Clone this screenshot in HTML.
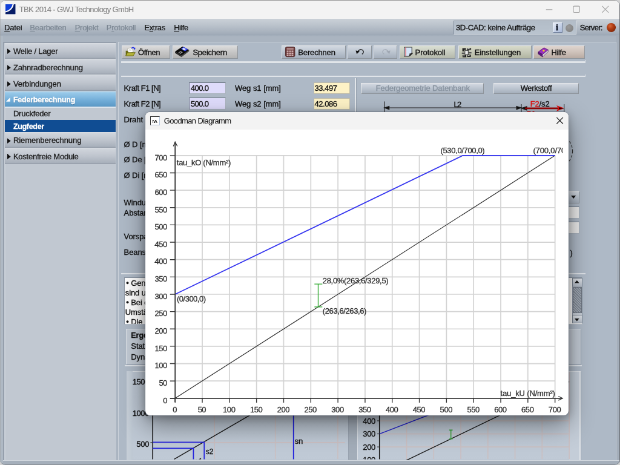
<!DOCTYPE html>
<html><head><meta charset="utf-8"><title>TBK 2014 - GWJ Technology GmbH</title>
<style>
html,body{margin:0;padding:0;width:620px;height:465px;overflow:hidden;background:#d2d2d2;}
#root{position:absolute;left:0;top:0;width:1024px;height:768px;transform:scale(0.60546875);transform-origin:0 0;font-family:"Liberation Sans",sans-serif;font-size:12px;overflow:hidden;background:#adb8c5;will-change:transform;opacity:0.999;border-radius:9px;}
#root div{position:absolute;box-sizing:border-box;}
#root svg{position:absolute;overflow:visible;}
.t{position:absolute;white-space:nowrap;-webkit-text-stroke:0.34px currentColor;}
u{text-decoration:underline;}
</style></head><body><div id="root">
<div style="left:0.0px;top:0.0px;width:1024.0px;height:768.0px;background:#aab4c0;"></div>
<div style="left:0.0px;top:0.0px;width:1024.0px;height:31.22px;background:#f3f3f3;"></div>
<svg style="left:9.25px;top:6.61px" width="16.35" height="16.19" viewBox="0 0 16 16"><rect width="16" height="16" fill="#0a2a8a"/><path d="M0 0H12.5C11 6 6 10.5 0 12Z" fill="#1040d8"/><path d="M11.4 0h2.4C12.6 7.2 7 12.4 0 13.7v-2.3C6 10 10.4 5.8 11.4 0Z" fill="#fff"/><path d="M13.6 0H16V16H0V13.3C7 12 12.5 7 13.6 0Z" fill="#061c66"/></svg>
<span class="t" style="left:31px;top:8px;transform:translate(0.84px,0.34px);font-size:13px;line-height:16px;color:#858585;letter-spacing:-0.665px;-webkit-text-stroke:0.1px currentColor;">TBK 2014 - GWJ Technology GmbH</span>
<svg style="left:0;top:0" width="1024" height="32"><g stroke="#a2a2a2" stroke-width="1.15" fill="none"><path d="M901.78 15.86H912.35"/><rect x="946.87" y="10.07" width="10.41" height="10.41" rx="1.8"/><path d="M994.27 9.91L1005.17 20.81M1005.17 9.91L994.27 20.81"/></g></svg>
<div style="left:0.0px;top:31.22px;width:1024.0px;height:28.57px;background:linear-gradient(#cbd1d8 0%,#bcc4cd 35%,#a6b0bc 80%,#9ea9b6 92%,#aab5c2 100%);"></div>
<span class="t" style="left:7px;top:38px;transform:translate(0.07px,0.4px);font-size:13px;line-height:16px;color:#111;letter-spacing:-0.196px;-webkit-text-stroke:0.22px currentColor;"><u>D</u>atei</span>
<span class="t" style="left:49px;top:38px;transform:translate(0.35px,0.4px);font-size:13px;line-height:16px;color:#7d8894;letter-spacing:-0.289px;-webkit-text-stroke:0.22px currentColor;"><u>B</u>earbeiten</span>
<span class="t" style="left:123px;top:38px;transform:translate(0.67px,0.4px);font-size:13px;line-height:16px;color:#7d8894;letter-spacing:-0.275px;-webkit-text-stroke:0.22px currentColor;"><u>P</u>rojekt</span>
<span class="t" style="left:175px;top:38px;transform:translate(0.7px,0.4px);font-size:13px;line-height:16px;color:#7d8894;letter-spacing:-0.232px;-webkit-text-stroke:0.22px currentColor;">P<u>r</u>otokoll</span>
<span class="t" style="left:238px;top:38px;transform:translate(0.46px,0.4px);font-size:13px;line-height:16px;color:#111;letter-spacing:-0.432px;-webkit-text-stroke:0.22px currentColor;">E<u>x</u>tras</span>
<span class="t" style="left:287px;top:38px;transform:translate(0.18px,0.4px);font-size:13px;line-height:16px;color:#111;letter-spacing:-0.515px;-webkit-text-stroke:0.22px currentColor;"><u>H</u>ilfe</span>
<div style="left:749.34px;top:33.53px;width:202.32px;height:23.62px;background:linear-gradient(#b3bdc8,#bac4cf);border:1.3px solid;border-color:#8591a0 #d8dde4 #d8dde4 #8591a0;"></div>
<span class="t" style="left:752px;top:37px;transform:translate(0.94px,0.74px);font-size:13px;line-height:16px;color:#111;letter-spacing:-0.37px;">3D-CAD: keine Aufträge</span>
<div style="left:912.52px;top:37.16px;width:16.02px;height:16.35px;background:linear-gradient(135deg,#e6ecf6,#a9b9d8);border:1px solid;border-color:#eef2f8 #6f7f9c #6f7f9c #eef2f8;"></div>
<span class="t" style="left:917px;top:37px;transform:translate(0.93px,0.6px);font-size:14px;line-height:16px;color:#050a18;font-weight:bold;letter-spacing:0px;font-family:'Liberation Serif',serif;">i</span>
<div style="left:933.82px;top:39.64px;width:13.21px;height:13.21px;background:radial-gradient(circle at 40% 35%,#9a9a9a,#7c7c7c);border-radius:50%;"></div>
<span class="t" style="left:957px;top:37px;transform:translate(0.74px,0.74px);font-size:13px;line-height:16px;color:#111;letter-spacing:-0.708px;">Server:</span>
<div style="left:1002.2px;top:37.99px;width:15.19px;height:15.19px;background:radial-gradient(circle at 38% 32%,#d66a3c 0%,#b23e14 36%,#8c2c0b 68%,#591803 100%);border-radius:50%;"></div>
<div style="left:4.95px;top:68.87px;width:186.96px;height:691.37px;background:#c1c8d1;border:2.4px solid #959fac;border-right:none;border-bottom:none;box-shadow:inset 2px 0 0 #cbd2da;"></div>
<div style="left:7.6px;top:70.52px;width:183.82px;height:26.1px;background:linear-gradient(#dde1e6 0%,#d0d5dc 7%,#bfc5ce 50%,#a9b1bc 92%,#8f98a4 100%);"></div>
<svg style="left:11.89px;top:79.77px" width="5.78" height="9.25" viewBox="0 0 4 6"><path d="M0 0L4 3L0 6Z" fill="#111"/></svg>
<span class="t" style="left:21px;top:76px;transform:translate(0.93px,0.55px);font-size:13px;line-height:16px;color:#1c1c1c;letter-spacing:-0.225px;">Welle / Lager</span>
<div style="left:7.6px;top:96.95px;width:183.82px;height:26.1px;background:linear-gradient(#dde1e6 0%,#d0d5dc 7%,#bfc5ce 50%,#a9b1bc 92%,#8f98a4 100%);"></div>
<svg style="left:11.89px;top:107.02px" width="5.78" height="9.25" viewBox="0 0 4 6"><path d="M0 0L4 3L0 6Z" fill="#111"/></svg>
<span class="t" style="left:21px;top:103px;transform:translate(0.93px,0.8px);font-size:13px;line-height:16px;color:#1c1c1c;letter-spacing:-0.124px;">Zahnradberechnung</span>
<div style="left:7.6px;top:123.38px;width:183.82px;height:26.26px;background:linear-gradient(#dde1e6 0%,#d0d5dc 7%,#bfc5ce 50%,#a9b1bc 92%,#8f98a4 100%);"></div>
<svg style="left:11.89px;top:133.95px" width="5.78" height="9.25" viewBox="0 0 4 6"><path d="M0 0L4 3L0 6Z" fill="#111"/></svg>
<span class="t" style="left:21px;top:130px;transform:translate(0.93px,0.72px);font-size:13px;line-height:16px;color:#1c1c1c;letter-spacing:-0.118px;">Verbindungen</span>
<div style="left:7.6px;top:151.12px;width:183.82px;height:26.43px;background:linear-gradient(#b4d8ef 0%,#98c9e9 9%,#72add8 55%,#5d9bc8 88%,#5690bd 93%,#dce4ec 94%,#dce4ec 100%);"></div>
<svg style="left:9.91px;top:160.7px" width="6.77" height="6.94" viewBox="0 0 4 4"><path d="M4 0V4H0Z" fill="#fff"/></svg>
<span class="t" style="left:21px;top:156px;transform:translate(0.93px,0.94px);font-size:12.4px;line-height:16px;color:#fff;font-weight:bold;letter-spacing:-0.166px;text-shadow:0 1px 1px rgba(40,80,120,.6);">Federberechnung</span>
<span class="t" style="left:21px;top:180px;transform:translate(0.93px,0.11px);font-size:13px;line-height:16px;color:#1c1c1c;letter-spacing:-0.201px;">Druckfeder</span>
<div style="left:7.6px;top:198.19px;width:183.82px;height:19.98px;background:#104d93;"></div>
<span class="t" style="left:21px;top:200px;transform:translate(0.93px,0.87px);font-size:12.4px;line-height:16px;color:#fff;font-weight:bold;letter-spacing:-0.263px;">Zugfeder</span>
<div style="left:7.6px;top:218.18px;width:183.82px;height:25.77px;background:linear-gradient(#dde1e6 0%,#d0d5dc 7%,#bfc5ce 50%,#a9b1bc 92%,#8f98a4 100%);"></div>
<svg style="left:11.89px;top:227.59px" width="5.78" height="9.25" viewBox="0 0 4 6"><path d="M0 0L4 3L0 6Z" fill="#111"/></svg>
<span class="t" style="left:21px;top:224px;transform:translate(0.93px,0.37px);font-size:13px;line-height:16px;color:#1c1c1c;letter-spacing:-0.067px;">Riemenberechnung</span>
<div style="left:7.6px;top:244.27px;width:183.82px;height:26.26px;background:linear-gradient(#dde1e6 0%,#d0d5dc 7%,#bfc5ce 50%,#a9b1bc 92%,#8f98a4 100%);"></div>
<svg style="left:11.89px;top:254.18px" width="5.78" height="9.25" viewBox="0 0 4 6"><path d="M0 0L4 3L0 6Z" fill="#111"/></svg>
<span class="t" style="left:21px;top:250px;transform:translate(0.93px,0.96px);font-size:13px;line-height:16px;color:#1c1c1c;letter-spacing:-0.245px;">Kostenfreie Module</span>
<div style="left:194.56px;top:69.04px;width:823.66px;height:691.2px;background:#aeb9c6;border:1.6px solid #cdd4dc;border-bottom:none;"></div>
<div style="left:1018.22px;top:59.46px;width:5.78px;height:708.54px;background:#a4aeba;"></div>
<div style="left:200.84px;top:74.65px;width:80.6px;height:22.46px;border:1px solid;border-color:#e6e8ea #8f959c #8f959c #e6e8ea;background:linear-gradient(#dcdcdc,#c6c6c6 50%,#b4b4b4);"></div>
<span class="t" style="left:228px;top:78px;transform:translate(0.05px,0.7px);font-size:13px;line-height:16px;color:#111;letter-spacing:-0.458px;">Öffnen</span>
<div style="left:284.9px;top:74.65px;width:108.51px;height:22.46px;border:1px solid;border-color:#e6e8ea #8f959c #8f959c #e6e8ea;background:linear-gradient(#dcdcdc,#c6c6c6 50%,#b4b4b4);"></div>
<span class="t" style="left:318px;top:78px;transform:translate(0.4px,0.7px);font-size:13px;line-height:16px;color:#111;letter-spacing:-0.216px;">Speichern</span>
<div style="left:464.6px;top:74.65px;width:106.2px;height:22.46px;border:1px solid;border-color:#e6e8ea #8f959c #8f959c #e6e8ea;background:linear-gradient(#d3d9e1,#bcc5d0 50%,#a5afbc);"></div>
<span class="t" style="left:492px;top:78px;transform:translate(0.31px,0.7px);font-size:13px;line-height:16px;color:#111;letter-spacing:-0.16px;">Berechnen</span>
<div style="left:573.77px;top:74.65px;width:39.97px;height:22.46px;border:1px solid;border-color:#e6e8ea #8f959c #8f959c #e6e8ea;background:linear-gradient(#d3d9e1,#bcc5d0 50%,#a5afbc);"></div>
<div style="left:616.71px;top:74.65px;width:38.98px;height:22.46px;border:1px solid;border-color:#e6e8ea #8f959c #8f959c #e6e8ea;background:linear-gradient(#d3d9e1,#bcc5d0 50%,#a5afbc);"></div>
<div style="left:659.82px;top:74.65px;width:92.66px;height:22.46px;border:1px solid;border-color:#e6e8ea #8f959c #8f959c #e6e8ea;background:linear-gradient(#dadfd3,#c8ccc0 50%,#b5baac);"></div>
<span class="t" style="left:685px;top:78px;transform:translate(0.55px,0.7px);font-size:13px;line-height:16px;color:#111;letter-spacing:-0.047px;">Protokoll</span>
<div style="left:757.1px;top:74.65px;width:120.73px;height:22.46px;border:1px solid;border-color:#e6e8ea #8f959c #8f959c #e6e8ea;background:linear-gradient(#d8dbcb,#c6c9b8 50%,#b1b5a2);"></div>
<span class="t" style="left:783px;top:78px;transform:translate(0.66px,0.7px);font-size:13px;line-height:16px;color:#111;letter-spacing:-0.133px;">Einstellungen</span>
<div style="left:881.3px;top:74.65px;width:84.23px;height:22.46px;border:1px solid;border-color:#e6e8ea #8f959c #8f959c #e6e8ea;background:linear-gradient(#dfd5cf,#cfc3bb 50%,#b9aba3);"></div>
<span class="t" style="left:910px;top:78px;transform:translate(0.5px,0.7px);font-size:13px;line-height:16px;color:#111;letter-spacing:-0.391px;">Hilfe</span>
<svg style="left:206.78px;top:76.97px" width="16.85" height="16.19" viewBox="0 0 20 19" preserveAspectRatio="none"><path d="M.8 8V17.8H14.6V9.6H8L6.6 8Z" fill="#6a6a12"/><path d="M3.8 4.4L12.6 1.2L15.6 10.2L6.6 13.4Z" fill="#fff" stroke="#9c9c8c" stroke-width=".7"/><path d="M6.4 6.2L11.8 4.2M7.2 8.4L12.6 6.4" stroke="#b8b8b8" stroke-width=".7"/><path d="M.8 17.8L4.2 11.4H19.4L15.4 17.8Z" fill="#b3b238" stroke="#5c5c0a" stroke-width="1"/><path d="M12.2 3.8C13 1 16.6 .6 17.8 3.4" stroke="#2433e6" stroke-width="1.8" fill="none"/><path d="M15.4 3L19.8 2L18.8 6.6Z" fill="#2433e6"/></svg>
<svg style="left:288.37px;top:76.47px" width="25.27" height="18.66" viewBox="0 0 30 22" preserveAspectRatio="none"><path d="M1.2 11L14 18.6V21.4L1.2 13.6Z" fill="#2a2a2a"/><path d="M14 18.6L28.9 7.6V10L14 21.4Z" fill="#444"/><path d="M1.2 11L15.8 1L28.9 7.6L14 18.6Z" fill="#0a0a0a"/><path d="M12.6 5.4L18.2 1.9L26.6 6.2L21 10.2Z" fill="#3345ea"/><path d="M14.8 5.6L18.2 3.6L22.6 5.9L19.2 8.2Z" fill="#eef1ff"/><path d="M7.6 12.6L12.2 9.6L16.6 12L12 15.2Z" fill="#9a9a9a"/><path d="M9.8 12.6L11.6 11.4L13.4 12.4L11.6 13.6Z" fill="#1a1a1a"/></svg>
<svg style="left:470.54px;top:76.63px" width="16.35" height="17.18" viewBox="0 0 19 20" preserveAspectRatio="none"><rect x=".5" y=".5" width="18" height="19" rx="2.6" fill="#6c3b3b" stroke="#4a2424" stroke-width="1"/><rect x="3" y="2.6" width="13" height="3.2" fill="#b48c8c"/><rect x="3.0" y="7.6" width="3.4" height="2.5" fill="#dcbcbc"/><rect x="3.0" y="11.399999999999999" width="3.4" height="2.5" fill="#dcbcbc"/><rect x="3.0" y="15.2" width="3.4" height="2.5" fill="#dcbcbc"/><rect x="7.6" y="7.6" width="3.4" height="2.5" fill="#dcbcbc"/><rect x="7.6" y="11.399999999999999" width="3.4" height="2.5" fill="#dcbcbc"/><rect x="7.6" y="15.2" width="3.4" height="2.5" fill="#dcbcbc"/><rect x="12.2" y="7.6" width="3.4" height="2.5" fill="#dcbcbc"/><rect x="12.2" y="11.399999999999999" width="3.4" height="2.5" fill="#dcbcbc"/><rect x="12.2" y="15.2" width="3.4" height="2.5" fill="#dcbcbc"/></svg>
<svg style="left:586.65px;top:79.28px" width="15.19" height="11.89" viewBox="0 0 18 14" preserveAspectRatio="none"><path d="M4.5 8.2C6.5 2.6 13.2 1.6 15.4 6.2C16.4 8.6 15 11.2 12.8 12.2" stroke="#111" stroke-width="1.5" fill="none"/><path d="M.6 5.2L8.4 6.4L2.6 12.2Z" fill="#111"/></svg>
<svg style="left:629.93px;top:79.28px" width="15.19" height="11.89" viewBox="0 0 18 14" preserveAspectRatio="none"><g transform="translate(18 0) scale(-1 1)"><path d="M4.5 8.2C6.5 2.6 13.2 1.6 15.4 6.2C16.4 8.6 15 11.2 12.8 12.2" stroke="#a0a8b3" stroke-width="1.3" fill="none"/><path d="M.6 5.2L8.4 6.4L2.6 12.2Z" fill="#a0a8b3"/></g></svg>
<svg style="left:665.6px;top:77.3px" width="16.35" height="16.68" viewBox="0 0 20 20" preserveAspectRatio="none"><path d="M2 1.2H17.4V13L12 19H2Z" fill="#d5e4f6" stroke="#3a3a3a" stroke-width="1.3"/><path d="M5 1.6V18.6" stroke="#e04a4a" stroke-width="1.4"/><path d="M12 19L12.6 13.4L17.4 13Z" fill="#555"/><path d="M11.4 17.6L17.6 11.6L19.4 13.4L13.2 19.2Z" fill="#222"/></svg>
<svg style="left:761.06px;top:76.97px" width="18.83" height="18.83" viewBox="0 0 22 22" preserveAspectRatio="none"><path d="M3 3H10V6H6.6V9H3Z" fill="#222"/><path d="M12 2.5H20V6.5H15.4V8.8H12Z" fill="#3a3a3a"/><path d="M8 7.4H14.4V15.4H8Z" fill="#e9e9e9" stroke="#222" stroke-width="1"/><path d="M2 11.4H8V14H2ZM14.4 10.4H20.6V13H14.4Z" fill="#555"/><path d="M3.4 16.2H10.4V20.4H3.4ZM12.4 15.6H19.4V20H12.4Z" fill="#1e1e1e"/><path d="M4.6 17.2H8V18.4H4.6ZM13.6 16.6H17V17.8H13.6ZM13.2 3.6H17V4.8H13.2Z" fill="#f4f4f4"/></svg>
<svg style="left:888.24px;top:77.96px" width="18.17" height="17.18" viewBox="0 0 22 21" preserveAspectRatio="none"><path d="M1 9.6L12.6 1L21 5.4L9.6 14.6Z" fill="#9a2fc0" stroke="#4a1266" stroke-width="1"/><path d="M1 9.6V13.6L9.6 19.6V14.6Z" fill="#5a1a7a" stroke="#3a0c52" stroke-width=".8"/><path d="M9.6 14.6L21 5.4V9L9.6 19.6Z" fill="#f2ecf6" stroke="#4a1266" stroke-width=".8"/><path d="M9.6 16.4L21 6.8M9.6 18L21 8" stroke="#a9a0b2" stroke-width=".5"/><circle cx="12" cy="6.8" r="2" fill="#f2d024"/></svg>
<div style="left:199.68px;top:101.41px;width:767.34px;height:2.23px;background:linear-gradient(#d3d9e0,#e4e8ec 40%,#dfe3e8);"></div>
<div style="left:199.68px;top:125.03px;width:767.34px;height:2.23px;background:linear-gradient(#d3d9e0,#e4e8ec 40%,#dfe3e8);"></div>
<div style="left:199.68px;top:450.56px;width:767.34px;height:2.23px;background:linear-gradient(#d3d9e0,#e4e8ec 40%,#dfe3e8);"></div>
<div style="left:965.53px;top:99.43px;width:1.49px;height:3.96px;background:#dfe3e8;"></div>
<div style="left:965.53px;top:123.05px;width:1.49px;height:3.96px;background:#dfe3e8;"></div>
<div style="left:585.83px;top:128.83px;width:1.98px;height:321.4px;background:#e2e6ea;"></div>
<div style="left:587.81px;top:128.83px;width:0.83px;height:321.4px;background:#98a3b0;"></div>
<span class="t" style="left:204px;top:138px;transform:translate(0.6px,0.16px);font-size:13px;line-height:16px;color:#111;letter-spacing:-0.486px;">Kraft F1 [N]</span>
<span class="t" style="left:204px;top:163px;transform:translate(0.6px,0.76px);font-size:13px;line-height:16px;color:#111;letter-spacing:-0.486px;">Kraft F2 [N]</span>
<span class="t" style="left:204px;top:189px;transform:translate(0.6px,0.69px);font-size:13px;line-height:16px;color:#111;letter-spacing:-0.1px;">Draht</span>
<span class="t" style="left:204px;top:230px;transform:translate(0.6px,0.65px);font-size:13px;line-height:16px;color:#111;letter-spacing:-0.1px;">Ø D [mm]</span>
<span class="t" style="left:204px;top:256px;transform:translate(0.6px,0.41px);font-size:13px;line-height:16px;color:#111;letter-spacing:-0.1px;">Ø De [mm]</span>
<span class="t" style="left:204px;top:281px;transform:translate(0.6px,0.52px);font-size:13px;line-height:16px;color:#111;letter-spacing:-0.1px;">Ø Di [mm]</span>
<span class="t" style="left:204px;top:326px;transform:translate(0.6px,0.77px);font-size:13px;line-height:16px;color:#111;letter-spacing:-0.1px;">Windungszahl</span>
<span class="t" style="left:204px;top:343px;transform:translate(0.6px,0.78px);font-size:13px;line-height:16px;color:#111;letter-spacing:-0.1px;">Abstand</span>
<span class="t" style="left:204px;top:382px;transform:translate(0.6px,0.93px);font-size:13px;line-height:16px;color:#111;letter-spacing:-0.1px;">Vorspannung</span>
<span class="t" style="left:204px;top:408px;transform:translate(0.6px,0.86px);font-size:13px;line-height:16px;color:#111;letter-spacing:-0.1px;">Beanspruchung</span>
<div style="left:312.49px;top:135.6px;width:60.45px;height:19.65px;border:1px solid;border-color:#6f7a88 #aab3be #aab3be #6f7a88;background:#dfdcfb;"></div>
<span class="t" style="left:314px;top:138px;transform:translate(0.93px,0.16px);font-size:13px;line-height:16px;color:#111;letter-spacing:-0.618px;">400.0</span>
<div style="left:312.49px;top:161.2px;width:60.45px;height:19.65px;border:1px solid;border-color:#6f7a88 #aab3be #aab3be #6f7a88;background:#dfdcfb;"></div>
<span class="t" style="left:314px;top:163px;transform:translate(0.93px,0.76px);font-size:13px;line-height:16px;color:#111;letter-spacing:-0.618px;">500.0</span>
<span class="t" style="left:387px;top:138px;transform:translate(0.93px,0.16px);font-size:13px;line-height:16px;color:#111;letter-spacing:-0.036px;">Weg s1 [mm]</span>
<span class="t" style="left:387px;top:163px;transform:translate(0.93px,0.76px);font-size:13px;line-height:16px;color:#111;letter-spacing:-0.036px;">Weg s2 [mm]</span>
<div style="left:518.11px;top:135.76px;width:59.95px;height:19.65px;border:1px solid rgba(110,120,135,.45);background:#fdf2c6;"></div>
<span class="t" style="left:519px;top:138px;transform:translate(0.56px,0.16px);font-size:13px;line-height:16px;color:#111;letter-spacing:-0.487px;">33.497</span>
<div style="left:518.11px;top:161.53px;width:59.95px;height:19.65px;border:1px solid rgba(110,120,135,.45);background:#fdf2c6;"></div>
<span class="t" style="left:519px;top:163px;transform:translate(0.56px,0.76px);font-size:13px;line-height:16px;color:#111;letter-spacing:-0.487px;">42.086</span>
<div style="left:595.74px;top:136.75px;width:203.64px;height:18.0px;border:1px solid;border-color:#e6e8ea #8f959c #8f959c #e6e8ea;background:linear-gradient(#d3d9e1,#bcc5d0 50%,#a5afbc);"></div>
<span class="t" style="left:620px;top:137px;transform:translate(0.81px,0.83px);font-size:13px;line-height:16px;color:#8893a0;letter-spacing:-0.138px;">Federgeometrie Datenbank</span>
<div style="left:814.74px;top:136.75px;width:140.88px;height:18.0px;border:1px solid;border-color:#e6e8ea #8f959c #8f959c #e6e8ea;background:linear-gradient(#d3d9e1,#bcc5d0 50%,#a5afbc);"></div>
<span class="t" style="left:859px;top:137px;transform:translate(0.63px,0.83px);font-size:13px;line-height:16px;color:#111;letter-spacing:-0.321px;">Werkstoff</span>
<svg style="left:0;top:0" width="1024" height="768"><g stroke="#222" stroke-width="1.1" fill="none"><path d="M634.71 178.04H862.14M634.71 167.47V184.98M860.99 172.1V184.98M931.67 172.1V184.98"/><path d="M634.71 178.04l8 -2.6v5.2zM860.99 178.04l-8 -2.6v5.2zM860.99 178.87l9 -3v6z" fill="#111"/></g><path d="M867.1 178.87H923.25" stroke="#9c0606" stroke-width="2.8"/><path d="M932.01 178.87l-13 -4.8l3 4.8l-3 4.8z" fill="#e01010"/><path d="M932.01 178.87l-9 -1.6v3.2z" fill="#300"/><g fill="#e01010"><rect x="870.4" y="183.16" width="6" height="1.6"/><rect x="879.48" y="183.16" width="3" height="1.6"/></g></svg>
<span class="t" style="left:749px;top:164px;transform:translate(0.47px,0.58px);font-size:13px;line-height:16px;color:#111;letter-spacing:-1.744px;">L2</span>
<span class="t" style="left:875px;top:163px;transform:translate(0.65px,0.92px);font-size:13px;line-height:16px;color:#111;letter-spacing:-0.118px;"><span style="color:#e01010">F2</span>/s2</span>
<svg style="left:0;top:0" width="1024" height="768"><circle cx="918.3" cy="249.39" r="27.25" fill="none" stroke="#333" stroke-width="1.2" stroke-dasharray="4 3"/></svg>
<div style="left:891.87px;top:315.62px;width:64.74px;height:19.98px;border:1px solid;border-color:#e6e8ea #8f959c #8f959c #e6e8ea;background:linear-gradient(#d3d9e1,#bcc5d0 50%,#a5afbc);"></div>
<svg style="left:943.07px;top:323.06px" width="8.26" height="4.95" viewBox="0 0 10 6"><path d="M0 0H10L5 6Z" fill="#111"/></svg>
<div style="left:891.87px;top:340.56px;width:64.74px;height:19.98px;border:1px solid;border-color:#6f7a88 #aab3be #aab3be #6f7a88;background:#eaeaea;"></div>
<div style="left:891.87px;top:366.49px;width:64.74px;height:19.82px;border:1px solid;border-color:#6f7a88 #aab3be #aab3be #6f7a88;background:#eaeaea;"></div>
<span class="t" style="left:941px;top:409px;transform:translate(0.55px,0.85px);font-size:13px;line-height:16px;color:#111;letter-spacing:-0.1px;">)</span>
<div style="left:205.3px;top:458.49px;width:756.77px;height:77.13px;border:1px solid;border-color:#8792a0 #b9c1cb #b9c1cb #8792a0;background:#fff;"></div>
<span class="t" style="left:208px;top:460px;transform:translate(0.23px,0.06px);font-size:13px;line-height:16px;color:#111;letter-spacing:-0.1px;">• Genauigkeit</span>
<span class="t" style="left:206px;top:476px;transform:translate(0.75px,0.08px);font-size:13px;line-height:16px;color:#111;letter-spacing:-0.1px;">sind unbedingt</span>
<span class="t" style="left:208px;top:492px;transform:translate(0.23px,0.1px);font-size:13px;line-height:16px;color:#111;letter-spacing:-0.1px;">• Bei dynamischer</span>
<span class="t" style="left:206px;top:508px;transform:translate(0.75px,0.12px);font-size:13px;line-height:16px;color:#111;letter-spacing:-0.1px;">Umständen</span>
<div style="left:0;top:0;width:1024px;height:768px;clip-path:inset(523.56px 80.93px 233.21px 206.29px);">
<span class="t" style="left:208px;top:524px;transform:translate(0.23px,0.14px);font-size:13px;line-height:16px;color:#111;letter-spacing:-0.1px;">• Die Berechnung</span>
</div>
<div style="left:944.72px;top:458.82px;width:16.85px;height:75.48px;background:#c5ccd5;border:1px solid #8a94a2;"></div>
<div style="left:944.72px;top:458.82px;width:16.85px;height:14.53px;background:linear-gradient(#dfe3e8,#b5bdc8);border:1px solid #7d8794;"></div>
<div style="left:944.72px;top:520.26px;width:16.85px;height:14.04px;background:linear-gradient(#dfe3e8,#b5bdc8);border:1px solid #7d8794;"></div>
<div style="left:945.71px;top:474.34px;width:14.86px;height:42.61px;background:repeating-linear-gradient(45deg,#7f8792 0 1.5px,#a3abb6 1.5px 3px);border:1px solid #6e7682;"></div>
<svg style="left:949.35px;top:463.44px" width="7.6" height="4.62" viewBox="0 0 10 6"><path d="M0 6H10L5 0Z" fill="#111"/></svg>
<svg style="left:949.35px;top:525.54px" width="7.6" height="4.62" viewBox="0 0 10 6"><path d="M0 0H10L5 6Z" fill="#111"/></svg>
<div style="left:205.96px;top:602.67px;width:755.28px;height:2.23px;background:linear-gradient(#d3d9e0,#e4e8ec 40%,#dfe3e8);"></div>
<div style="left:208.1px;top:543.05px;width:752.31px;height:58.47px;background:#c1c9d3;border:1.5px solid;border-color:#dbe0e6 #99a3b0 #99a3b0 #dbe0e6;"></div>
<span class="t" style="left:216px;top:546px;transform:translate(0.33px,0.06px);font-size:12.4px;line-height:16px;color:#111;font-weight:bold;letter-spacing:0px;">Ergebnisse</span>
<span class="t" style="left:216px;top:564px;transform:translate(0.33px,0.44px);font-size:13px;line-height:16px;color:#111;letter-spacing:-0.1px;">Statisch</span>
<span class="t" style="left:216px;top:582px;transform:translate(0.33px,0.44px);font-size:13px;line-height:16px;color:#111;letter-spacing:-0.1px;">Dynamisch</span>
<div style="left:208.93px;top:613.08px;width:367.15px;height:146.66px;background:linear-gradient(#bac4d0,#c0cad6);border:1.5px solid;border-color:#dbe0e6 #99a3b0 transparent #dbe0e6;"></div>
<div style="left:208.93px;top:613.08px;width:9.91px;height:146.66px;background:linear-gradient(90deg,#c8d0d9,#bec8d3);"></div>
<div style="left:590.29px;top:613.08px;width:369.3px;height:146.66px;background:linear-gradient(#bac4d0,#c0cad6);border:1.5px solid;border-color:#dbe0e6 #99a3b0 transparent #dbe0e6;"></div>
<div style="left:940.43px;top:614.4px;width:17.51px;height:145.34px;background:#c4cdd8;"></div>
<div style="left:957.44px;top:613.08px;width:1.16px;height:146.66px;background:#e4e8ec;"></div>
<div style="left:576.08px;top:607.79px;width:14.2px;height:151.95px;background:#a3adb9;"></div>
<svg style="left:0;top:0" width="1024" height="759.74" viewBox="0 0 1024 759.74"><path d="M354.11 614.4V758.09" stroke="#cbbfc1" stroke-width="1.6"/><path d="M454.69 614.4V758.09" stroke="#cbbfc1" stroke-width="1.6"/><path d="M557.91 614.4V758.09" stroke="#cbbfc1" stroke-width="1.6"/><path d="M252.2 730.84H569.81" stroke="#cbbfc1" stroke-width="1.6"/><path d="M252.2 680.46H569.81" stroke="#cbbfc1" stroke-width="1.6"/><path d="M252.2 630.92H569.81" stroke="#cbbfc1" stroke-width="1.6"/><path d="M252.2 619.35V758.42" stroke="#1c1c1c" stroke-width="1.7"/><path d="M248.4 730.84H252.2" stroke="#222" stroke-width="1"/><path d="M248.4 680.46H252.2" stroke="#222" stroke-width="1"/><path d="M248.4 630.92H252.2" stroke="#222" stroke-width="1"/><path d="M287.71 758.42L478.97 647.1" stroke="#1c1c1c" stroke-width="1.5"/><path d="M252.2 730.34H337.26V758.42M252.2 740.42H319.42V758.42M484.75 627.61V758.42" stroke="#2222dd" stroke-width="1.8" fill="none"/><path d="M671.55 614.4V758.09" stroke="#cbbfc1" stroke-width="1.6"/><path d="M716.3 614.4V758.09" stroke="#cbbfc1" stroke-width="1.6"/><path d="M761.06 614.4V758.09" stroke="#cbbfc1" stroke-width="1.6"/><path d="M805.82 614.4V758.09" stroke="#cbbfc1" stroke-width="1.6"/><path d="M850.58 614.4V758.09" stroke="#cbbfc1" stroke-width="1.6"/><path d="M895.34 614.4V758.09" stroke="#cbbfc1" stroke-width="1.6"/><path d="M940.1 614.4V758.09" stroke="#cbbfc1" stroke-width="1.6"/><path d="M626.79 738.11H940.1" stroke="#cbbfc1" stroke-width="1.6"/><path d="M622.99 738.11H626.79" stroke="#222" stroke-width="1"/><path d="M626.79 716.63H940.1" stroke="#cbbfc1" stroke-width="1.6"/><path d="M622.99 716.63H626.79" stroke="#222" stroke-width="1"/><path d="M626.79 695.0H940.1" stroke="#cbbfc1" stroke-width="1.6"/><path d="M622.99 695.0H626.79" stroke="#222" stroke-width="1"/><path d="M626.79 673.53H940.1" stroke="#cbbfc1" stroke-width="1.6"/><path d="M622.99 673.53H626.79" stroke="#222" stroke-width="1"/><path d="M626.79 651.89H940.1" stroke="#cbbfc1" stroke-width="1.6"/><path d="M622.99 651.89H626.79" stroke="#222" stroke-width="1"/><path d="M626.79 630.42H940.1" stroke="#cbbfc1" stroke-width="1.6"/><path d="M622.99 630.42H626.79" stroke="#222" stroke-width="1"/><path d="M626.79 619.35V758.42" stroke="#1c1c1c" stroke-width="1.7"/><path d="M626.79 716.63L776.26 659.16" stroke="#2222cc" stroke-width="1.5" fill="none"/><path d="M626.79 781.71L940.1 630.42" stroke="#1c1c1c" stroke-width="1.4"/><path d="M744.71 710.19V724.89M741.9 710.19H747.52M741.9 724.89H747.52" stroke="#2ea02e" stroke-width="1.4" fill="none"/></svg>
<span class="t" style="left:218px;top:623px;transform:translate(0.8px,0.4px);font-size:13px;line-height:16px;color:#111;letter-spacing:-0.447px;">1500</span>
<span class="t" style="left:218px;top:675px;transform:translate(0.8px,0.26px);font-size:13px;line-height:16px;color:#111;letter-spacing:-0.447px;">1000</span>
<span class="t" style="left:225px;top:726px;transform:translate(0.25px,0.3px);font-size:13px;line-height:16px;color:#111;letter-spacing:-0.275px;">500</span>
<span class="t" style="left:339px;top:737px;transform:translate(0.7px,0.67px);font-size:12px;line-height:16px;color:#111;letter-spacing:0px;">s2</span>
<div style="left:0;top:0;width:1024px;height:768px;clip-path:inset(743.23px 687.07px 9.41px 313.81px);">
<span class="t" style="left:321px;top:753px;transform:translate(0.04px,0.88px);font-size:13px;line-height:16px;color:#111;letter-spacing:-0.1px;">s1</span>
</div>
<span class="t" style="left:486px;top:721px;transform:translate(0.53px,0.34px);font-size:13px;line-height:16px;color:#111;letter-spacing:-0.1px;">sn</span>
<span class="t" style="left:599px;top:687px;transform:translate(0.34px,0.98px);font-size:13px;line-height:16px;color:#111;letter-spacing:-0.358px;">400</span>
<span class="t" style="left:599px;top:709px;transform:translate(0.34px,0.45px);font-size:13px;line-height:16px;color:#111;letter-spacing:-0.358px;">300</span>
<span class="t" style="left:599px;top:730px;transform:translate(0.34px,0.76px);font-size:13px;line-height:16px;color:#111;letter-spacing:-0.358px;">200</span>
<div style="left:0;top:0;width:1024px;height:768px;clip-path:inset(743.23px 399.69px 9.41px 594.58px);">
<span class="t" style="left:599px;top:752px;transform:translate(0.34px,0.39px);font-size:13px;line-height:16px;color:#111;letter-spacing:-0.358px;">100</span>
</div>
<div style="left:239.98px;top:184.98px;width:699.13px;height:501.26px;background:#fff;border-radius:8px;box-shadow:0 0 0 1px rgba(80,90,105,.38),0 16px 40px rgba(0,0,0,.42),0 3px 14px rgba(0,0,0,.26);overflow:hidden;"><div style="left:0;top:0;width:100%;height:29.07px;background:#f3f3f3;"></div></div>
<div style="left:248.24px;top:191.92px;width:15.69px;height:15.36px;background:#fff;border:1.6px solid;border-color:#2c2c2c #b4c4dc #b4c4dc #2c2c2c;"></div>
<span class="t" style="left:251px;top:192px;transform:translate(0.34px,0.87px);font-size:8px;line-height:16px;color:#222;font-weight:bold;letter-spacing:0.3px;-webkit-text-stroke:0;">fA</span>
<span class="t" style="left:270px;top:191px;transform:translate(0.66px,0.5px);font-size:13px;line-height:16px;color:#1a1a1a;letter-spacing:-0.612px;-webkit-text-stroke:0.08px currentColor;">Goodman Diagramm</span>
<svg style="left:0;top:0" width="1024" height="768"><path d="M919.29 193.9L929.86 204.47M929.86 193.9L919.29 204.47" stroke="#222" stroke-width="1.3" fill="none"/></svg>
<svg style="left:0;top:0" width="929.53" height="768"><path d="M334.02 657.84V256.83M289.2 629.19H916.65" stroke="#d3d3d3" stroke-width="1.7" fill="none"/><path d="M378.83 657.84V256.83M289.2 600.55H916.65" stroke="#d3d3d3" stroke-width="1.7" fill="none"/><path d="M423.65 657.84V256.83M289.2 571.91H916.65" stroke="#d3d3d3" stroke-width="1.7" fill="none"/><path d="M468.47 657.84V256.83M289.2 543.26H916.65" stroke="#d3d3d3" stroke-width="1.7" fill="none"/><path d="M513.29 657.84V256.83M289.2 514.62H916.65" stroke="#d3d3d3" stroke-width="1.7" fill="none"/><path d="M558.1 657.84V256.83M289.2 485.98H916.65" stroke="#d3d3d3" stroke-width="1.7" fill="none"/><path d="M602.92 657.84V256.83M289.2 457.33H916.65" stroke="#d3d3d3" stroke-width="1.7" fill="none"/><path d="M647.74 657.84V256.83M289.2 428.69H916.65" stroke="#d3d3d3" stroke-width="1.7" fill="none"/><path d="M692.56 657.84V256.83M289.2 400.04H916.65" stroke="#d3d3d3" stroke-width="1.7" fill="none"/><path d="M737.37 657.84V256.83M289.2 371.4H916.65" stroke="#d3d3d3" stroke-width="1.7" fill="none"/><path d="M782.19 657.84V256.83M289.2 342.76H916.65" stroke="#d3d3d3" stroke-width="1.7" fill="none"/><path d="M827.01 657.84V256.83M289.2 314.11H916.65" stroke="#d3d3d3" stroke-width="1.7" fill="none"/><path d="M871.83 657.84V256.83M289.2 285.47H916.65" stroke="#d3d3d3" stroke-width="1.7" fill="none"/><path d="M916.65 657.84V256.83M289.2 256.83H916.65" stroke="#d3d3d3" stroke-width="1.7" fill="none"/><path d="M289.2 657.84L916.65 256.83" stroke="#303030" stroke-width="1.2"/><path d="M289.2 485.98L764.26 256.83H916.65" stroke="#3636f0" stroke-width="1.7" fill="none"/><path d="M289.2 663.95V234.86M280.77 657.84H928.87" stroke="#333" stroke-width="1.7" fill="none"/><path d="M286.22 241.47L289.2 234.2L292.83 241.47M922.26 654.53L929.2 657.84L922.26 661.14" stroke="#333" stroke-width="1.2" fill="none"/><path d="M280.77 657.84H289.2M289.2 657.84V664.94" stroke="#333" stroke-width="1.4" fill="none"/><path d="M280.77 629.19H289.2M334.02 657.84V664.94" stroke="#333" stroke-width="1.4" fill="none"/><path d="M280.77 600.55H289.2M378.83 657.84V664.94" stroke="#333" stroke-width="1.4" fill="none"/><path d="M280.77 571.91H289.2M423.65 657.84V664.94" stroke="#333" stroke-width="1.4" fill="none"/><path d="M280.77 543.26H289.2M468.47 657.84V664.94" stroke="#333" stroke-width="1.4" fill="none"/><path d="M280.77 514.62H289.2M513.29 657.84V664.94" stroke="#333" stroke-width="1.4" fill="none"/><path d="M280.77 485.98H289.2M558.1 657.84V664.94" stroke="#333" stroke-width="1.4" fill="none"/><path d="M280.77 457.33H289.2M602.92 657.84V664.94" stroke="#333" stroke-width="1.4" fill="none"/><path d="M280.77 428.69H289.2M647.74 657.84V664.94" stroke="#333" stroke-width="1.4" fill="none"/><path d="M280.77 400.04H289.2M692.56 657.84V664.94" stroke="#333" stroke-width="1.4" fill="none"/><path d="M280.77 371.4H289.2M737.37 657.84V664.94" stroke="#333" stroke-width="1.4" fill="none"/><path d="M280.77 342.76H289.2M782.19 657.84V664.94" stroke="#333" stroke-width="1.4" fill="none"/><path d="M280.77 314.11H289.2M827.01 657.84V664.94" stroke="#333" stroke-width="1.4" fill="none"/><path d="M280.77 285.47H289.2M871.83 657.84V664.94" stroke="#333" stroke-width="1.4" fill="none"/><path d="M280.77 256.83H289.2M916.65 657.84V664.94" stroke="#333" stroke-width="1.4" fill="none"/><path d="M525.48 506.83V469.08M519.27 469.08H532.31M519.27 506.83H532.31" stroke="#2eaa2e" stroke-width="1.3" fill="none"/></svg>
<span class="t" style="left:269px;top:653px;transform:translate(0.34px,0.62px);font-size:13px;line-height:16px;color:#2e2e2e;letter-spacing:-0.294px;-webkit-text-stroke:0.3px currentColor;">0</span>
<span class="t" style="left:285px;top:668px;transform:translate(0.36px,0.98px);font-size:13px;line-height:16px;color:#2e2e2e;letter-spacing:-0.294px;-webkit-text-stroke:0.3px currentColor;">0</span>
<span class="t" style="left:262px;top:624px;transform:translate(0.41px,0.98px);font-size:13px;line-height:16px;color:#2e2e2e;letter-spacing:-0.587px;-webkit-text-stroke:0.3px currentColor;">50</span>
<span class="t" style="left:326px;top:668px;transform:translate(0.71px,0.98px);font-size:13px;line-height:16px;color:#2e2e2e;letter-spacing:-0.587px;-webkit-text-stroke:0.3px currentColor;">50</span>
<span class="t" style="left:255px;top:596px;transform:translate(0.47px,0.34px);font-size:13px;line-height:16px;color:#2e2e2e;letter-spacing:-0.441px;-webkit-text-stroke:0.3px currentColor;">100</span>
<span class="t" style="left:368px;top:668px;transform:translate(0.06px,0.98px);font-size:13px;line-height:16px;color:#2e2e2e;letter-spacing:-0.441px;-webkit-text-stroke:0.3px currentColor;">100</span>
<span class="t" style="left:255px;top:567px;transform:translate(0.47px,0.69px);font-size:13px;line-height:16px;color:#2e2e2e;letter-spacing:-0.441px;-webkit-text-stroke:0.3px currentColor;">150</span>
<span class="t" style="left:412px;top:668px;transform:translate(0.88px,0.98px);font-size:13px;line-height:16px;color:#2e2e2e;letter-spacing:-0.441px;-webkit-text-stroke:0.3px currentColor;">150</span>
<span class="t" style="left:255px;top:539px;transform:translate(0.47px,0.05px);font-size:13px;line-height:16px;color:#2e2e2e;letter-spacing:-0.441px;-webkit-text-stroke:0.3px currentColor;">200</span>
<span class="t" style="left:457px;top:668px;transform:translate(0.7px,0.98px);font-size:13px;line-height:16px;color:#2e2e2e;letter-spacing:-0.441px;-webkit-text-stroke:0.3px currentColor;">200</span>
<span class="t" style="left:255px;top:510px;transform:translate(0.47px,0.41px);font-size:13px;line-height:16px;color:#2e2e2e;letter-spacing:-0.441px;-webkit-text-stroke:0.3px currentColor;">250</span>
<span class="t" style="left:502px;top:668px;transform:translate(0.52px,0.98px);font-size:13px;line-height:16px;color:#2e2e2e;letter-spacing:-0.441px;-webkit-text-stroke:0.3px currentColor;">250</span>
<span class="t" style="left:255px;top:481px;transform:translate(0.47px,0.76px);font-size:13px;line-height:16px;color:#2e2e2e;letter-spacing:-0.441px;-webkit-text-stroke:0.3px currentColor;">300</span>
<span class="t" style="left:547px;top:668px;transform:translate(0.33px,0.98px);font-size:13px;line-height:16px;color:#2e2e2e;letter-spacing:-0.441px;-webkit-text-stroke:0.3px currentColor;">300</span>
<span class="t" style="left:255px;top:453px;transform:translate(0.47px,0.12px);font-size:13px;line-height:16px;color:#2e2e2e;letter-spacing:-0.441px;-webkit-text-stroke:0.3px currentColor;">350</span>
<span class="t" style="left:592px;top:668px;transform:translate(0.15px,0.98px);font-size:13px;line-height:16px;color:#2e2e2e;letter-spacing:-0.441px;-webkit-text-stroke:0.3px currentColor;">350</span>
<span class="t" style="left:255px;top:424px;transform:translate(0.47px,0.48px);font-size:13px;line-height:16px;color:#2e2e2e;letter-spacing:-0.441px;-webkit-text-stroke:0.3px currentColor;">400</span>
<span class="t" style="left:636px;top:668px;transform:translate(0.97px,0.98px);font-size:13px;line-height:16px;color:#2e2e2e;letter-spacing:-0.441px;-webkit-text-stroke:0.3px currentColor;">400</span>
<span class="t" style="left:255px;top:395px;transform:translate(0.47px,0.83px);font-size:13px;line-height:16px;color:#2e2e2e;letter-spacing:-0.441px;-webkit-text-stroke:0.3px currentColor;">450</span>
<span class="t" style="left:681px;top:668px;transform:translate(0.79px,0.98px);font-size:13px;line-height:16px;color:#2e2e2e;letter-spacing:-0.441px;-webkit-text-stroke:0.3px currentColor;">450</span>
<span class="t" style="left:255px;top:367px;transform:translate(0.47px,0.19px);font-size:13px;line-height:16px;color:#2e2e2e;letter-spacing:-0.441px;-webkit-text-stroke:0.3px currentColor;">500</span>
<span class="t" style="left:726px;top:668px;transform:translate(0.6px,0.98px);font-size:13px;line-height:16px;color:#2e2e2e;letter-spacing:-0.441px;-webkit-text-stroke:0.3px currentColor;">500</span>
<span class="t" style="left:255px;top:338px;transform:translate(0.47px,0.54px);font-size:13px;line-height:16px;color:#2e2e2e;letter-spacing:-0.441px;-webkit-text-stroke:0.3px currentColor;">550</span>
<span class="t" style="left:771px;top:668px;transform:translate(0.42px,0.98px);font-size:13px;line-height:16px;color:#2e2e2e;letter-spacing:-0.441px;-webkit-text-stroke:0.3px currentColor;">550</span>
<span class="t" style="left:255px;top:309px;transform:translate(0.47px,0.9px);font-size:13px;line-height:16px;color:#2e2e2e;letter-spacing:-0.441px;-webkit-text-stroke:0.3px currentColor;">600</span>
<span class="t" style="left:816px;top:668px;transform:translate(0.24px,0.98px);font-size:13px;line-height:16px;color:#2e2e2e;letter-spacing:-0.441px;-webkit-text-stroke:0.3px currentColor;">600</span>
<span class="t" style="left:255px;top:281px;transform:translate(0.47px,0.26px);font-size:13px;line-height:16px;color:#2e2e2e;letter-spacing:-0.441px;-webkit-text-stroke:0.3px currentColor;">650</span>
<span class="t" style="left:861px;top:668px;transform:translate(0.06px,0.98px);font-size:13px;line-height:16px;color:#2e2e2e;letter-spacing:-0.441px;-webkit-text-stroke:0.3px currentColor;">650</span>
<span class="t" style="left:255px;top:252px;transform:translate(0.47px,0.61px);font-size:13px;line-height:16px;color:#2e2e2e;letter-spacing:-0.441px;-webkit-text-stroke:0.3px currentColor;">700</span>
<span class="t" style="left:905px;top:668px;transform:translate(0.87px,0.98px);font-size:13px;line-height:16px;color:#2e2e2e;letter-spacing:-0.441px;-webkit-text-stroke:0.3px currentColor;">700</span>
<span class="t" style="left:291px;top:260px;transform:translate(0.81px,0.87px);font-size:13px;line-height:16px;color:#2e2e2e;letter-spacing:-0.281px;-webkit-text-stroke:0.3px currentColor;">tau_kO (N/mm²)</span>
<span class="t" style="left:826px;top:642px;transform:translate(0.6px,0.06px);font-size:13px;line-height:16px;color:#2e2e2e;letter-spacing:-0.162px;-webkit-text-stroke:0.3px currentColor;">tau_kU (N/mm²)</span>
<span class="t" style="left:291px;top:485px;transform:translate(0.97px,0.82px);font-size:13px;line-height:16px;color:#2e2e2e;letter-spacing:-0.497px;-webkit-text-stroke:0.3px currentColor;">(0/300,0)</span>
<span class="t" style="left:727px;top:241px;transform:translate(0.5px,0.22px);font-size:13px;line-height:16px;color:#2e2e2e;letter-spacing:-0.348px;-webkit-text-stroke:0.3px currentColor;">(530,0/700,0)</span>
<div style="left:0;top:0;width:1024px;height:768px;clip-path:inset(231.23px 94.47px 503.74px 875.35px);">
<span class="t" style="left:880px;top:241px;transform:translate(0.44px,0.22px);font-size:13px;line-height:16px;color:#2e2e2e;letter-spacing:-0.15px;-webkit-text-stroke:0.3px currentColor;">(700,0/700,0)</span>
</div>
<span class="t" style="left:532px;top:456px;transform:translate(0.78px,0.26px);font-size:13px;line-height:16px;color:#2e2e2e;letter-spacing:-0.315px;-webkit-text-stroke:0.3px currentColor;">28,0%(263,6/329,5)</span>
<span class="t" style="left:532px;top:506px;transform:translate(0.78px,0.14px);font-size:13px;line-height:16px;color:#2e2e2e;letter-spacing:-0.389px;-webkit-text-stroke:0.3px currentColor;">(263,6/263,6)</span>
<div style="left:0.0px;top:760.07px;width:1024.0px;height:7.93px;background:#a5afbb;border-top:1.6px solid #d3d9e0;"></div>
<div style="left:0.0px;top:59.46px;width:5.12px;height:708.54px;background:#afb9c4;"></div>
<div style="left:0.0px;top:0.0px;width:1024.0px;height:768.0px;border:1px solid rgba(110,110,110,.55);border-left-color:rgba(160,160,160,.5);border-radius:9px;pointer-events:none;"></div>
<div style="left:1022.18px;top:0.0px;width:1.82px;height:768.0px;background:rgba(96,100,108,.42);"></div>
<div style="left:0.0px;top:0.0px;width:1024.0px;height:1.16px;background:rgba(120,120,120,.35);"></div>
</div></body></html>
